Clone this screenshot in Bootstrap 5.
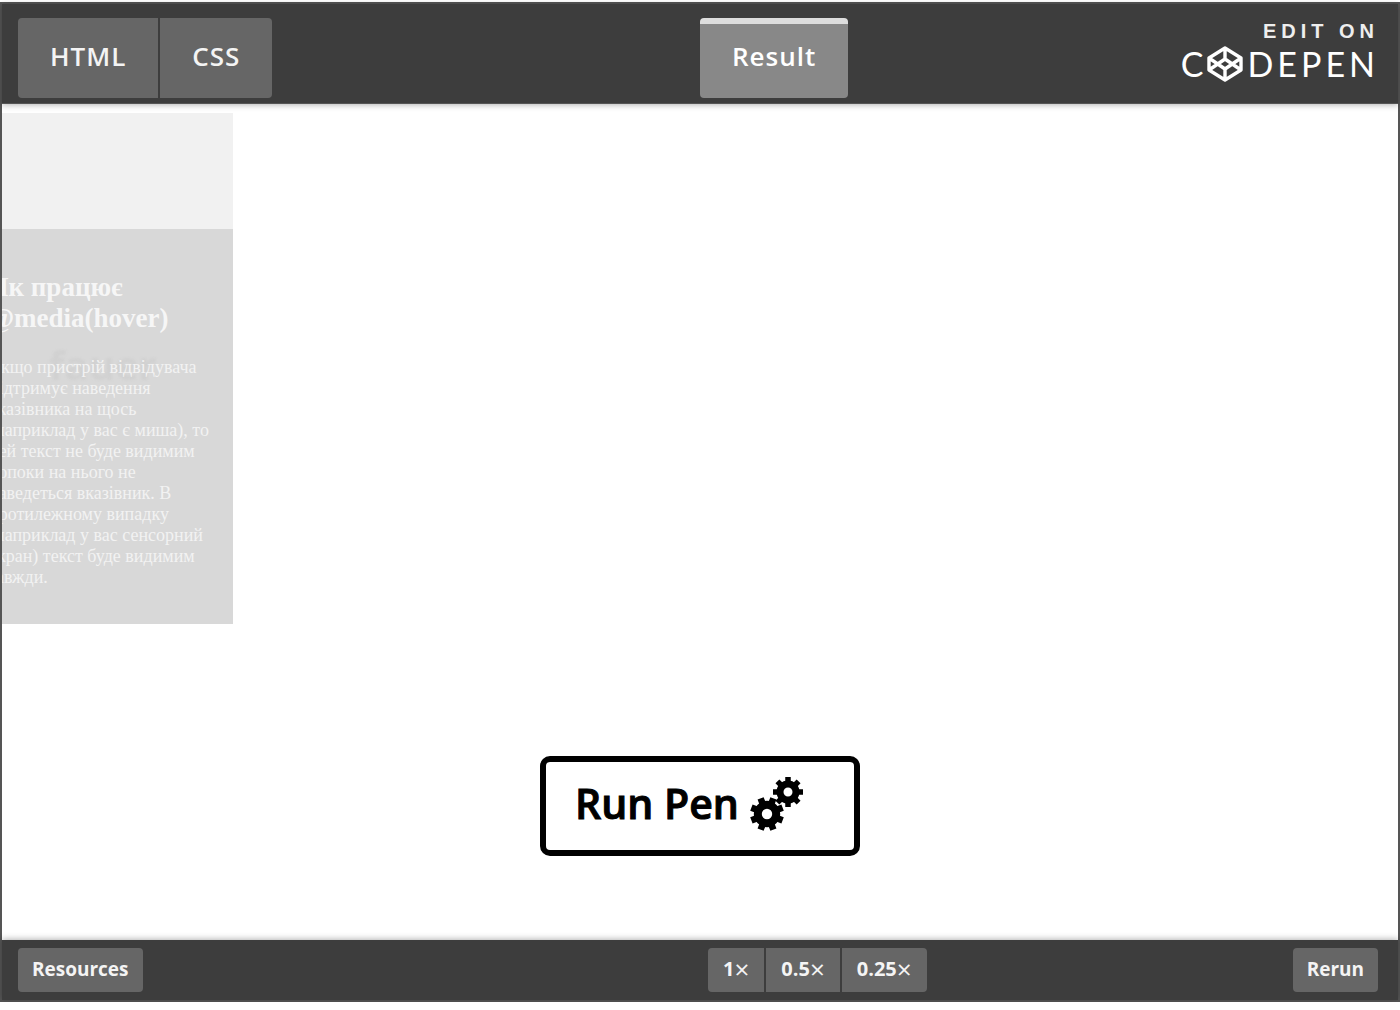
<!DOCTYPE html>
<html lang="uk">
<head>
<meta charset="utf-8">
<meta name="viewport" content="width=device-width, initial-scale=1">
<title>Pen</title>
<link rel="stylesheet" href="https://cdn.jsdelivr.net/npm/bootstrap@5.3.0/dist/css/bootstrap.min.css">
<style>
body { font-family: "Open Sans", "Noto Sans", sans-serif; background: #fff; }
.pen { height: calc(100vh - 10px); margin-top: 2px; border: 2px solid #555; }
.pen-bar { background: #3d3d3d; color: #fff; position: relative; z-index: 1; }
.pen-head { padding: 14px 16px 5px; border-bottom: 1px solid #555; box-shadow: 0 1px 6px rgba(0,0,0,.3); }
.pen-foot { padding: 8px 20px 8px 16px; box-shadow: 0 -1px 6px rgba(0,0,0,.3); }
.side { flex: 1 1 0; }
.tab-btn, .small-btn { border: 0; background: #666; color: #f4f4f4; font-weight: 600; }
.tab-btn { height: 80px; padding: 0 32px 4px; font-size: 26px; letter-spacing: 1px; }
.tab-btn.active { background: #888; color: #fff; border-top: 6px solid #ddd; padding-bottom: 10px; }
.small-btn { height: 44px; padding: 0 14px 2px; font-size: 19px; font-weight: 700; line-height: 28px; }
.times { font-size: 26px; line-height: 20px; font-weight: 400; vertical-align: -3px; }
.split { gap: 2px; border-radius: 4px; overflow: hidden; }
.speeds { margin-left: 10px; }
.speeds .small-btn { padding-left: 15px; padding-right: 15px; font-size: 20px; }
.brand-link { color: #fff; text-decoration: none; padding-right: 3px; }
.edit-on { font: bold 20px/26px "Liberation Sans", sans-serif; letter-spacing: 5px; color: #eee; }
.wordmark { font: 400 34px/40px Lato, sans-serif; letter-spacing: 4px; }
.stage { overflow: hidden; min-height: 0; }
.demo { width: 252px; margin: 9px 0 0 -21px; background: #f1f1f1; padding-top: 116px; font-family: "Liberation Serif", serif; }
.demo-text { background: #d8d8d8; color: #f2f2f2; padding: 43px 13px 36px 8px; position: relative; }
.demo-text h2 { font-size: 27px; line-height: 31px; font-weight: 700; margin: 0 0 23px; color: #f6f6f6; }
.demo-text p { font-size: 18px; line-height: 21px; margin: 0; position: relative; }
.ghost { position: absolute; left: 68px; top: 106px; font: 700 40px/60px "Open Sans", sans-serif; color: #d1d1d1; filter: blur(1px); }
.run { width: 320px; height: 100px; border: 6px solid #000; border-radius: 10px; background: #fff; color: #000; padding: 0 28px 5px 29px; margin-bottom: 84px; font-size: 41px; font-weight: 600; gap: 11px; -webkit-text-stroke: 1px #000; }
</style>
<script src="https://cdn.jsdelivr.net/npm/bootstrap@5.3.0/dist/js/bootstrap.bundle.min.js"></script>
</head>
<body>
<div class="pen d-flex flex-column">
  <header class="pen-bar pen-head d-flex">
    <div class="side d-flex"><div class="split d-flex align-self-start"><button class="tab-btn" type="button">HTML</button><button class="tab-btn" type="button">CSS</button></div></div>
    <div class="side d-flex justify-content-between">
      <button class="tab-btn active rounded-1" type="button">Result</button>
      <a class="brand-link text-end" href="#">
        <span class="edit-on d-block">EDIT ON</span>
        <span class="wordmark d-flex align-items-center justify-content-end">C<svg class="me-1" width="36" height="36" viewBox="0 0 36 36" fill="none" stroke="currentColor" stroke-width="3.4" stroke-linejoin="round" aria-hidden="true"><path d="M18 2 34 12V24L18 34 2 24V12ZM18 2V13M18 23V34M2 12 18 23 34 12M2 24 18 13 34 24"/></svg>DEPEN</span>
      </a>
    </div>
  </header>
  <main class="stage flex-grow-1 d-flex flex-column justify-content-between">
    <article class="demo"><div class="demo-text"><span class="ghost">fauer</span><h2>Як працює<br>@media(hover)</h2>
    <p>Якщо пристрій відвідувача підтримує наведення вказівника на щось (наприклад у вас є миша), то цей текст не буде видимим допоки на нього не наведеться вказівник. В протилежному випадку (наприклад у вас сенсорний екран) текст буде видимим завжди.</p></div></article>
    <button class="run d-flex align-items-center align-self-center" type="button">Run Pen
      <svg width="56" height="56" viewBox="0 0 56 56" fill="none" stroke="#000" aria-hidden="true">
        <g transform="translate(17 38)"><circle r="9.2" stroke-width="8"/><path stroke-width="6.5" d="M-6.4-15.6-4.6-11M6.4-15.6 4.6-11M15.6-6.4 11-4.6M15.6 6.4 11 4.6M6.4 15.6 4.6 11M-6.4 15.6-4.6 11M-15.6 6.4-11 4.6M-15.6-6.4-11-4.6"/></g>
        <g transform="translate(38 16)"><circle r="8" stroke-width="7"/><path stroke-width="5.5" d="M0-15V-10M0 15V10M-15 0H-10M15 0H10M-10.6-10.6-7-7M10.6-10.6 7-7M-10.6 10.6-7 7M10.6 10.6 7 7"/></g>
      </svg>
    </button>
  </main>
  <footer class="pen-bar pen-foot d-flex">
    <div class="side"><button class="small-btn rounded-1" type="button">Resources</button></div>
    <div class="side d-flex justify-content-between">
      <div class="split speeds d-flex"><button class="small-btn" type="button">1<span class="times">×</span></button><button class="small-btn" type="button">0.5<span class="times">×</span></button><button class="small-btn" type="button">0.25<span class="times">×</span></button></div>
      <button class="small-btn rounded-1" type="button">Rerun</button>
    </div>
  </footer>
</div>
</body>
</html>
